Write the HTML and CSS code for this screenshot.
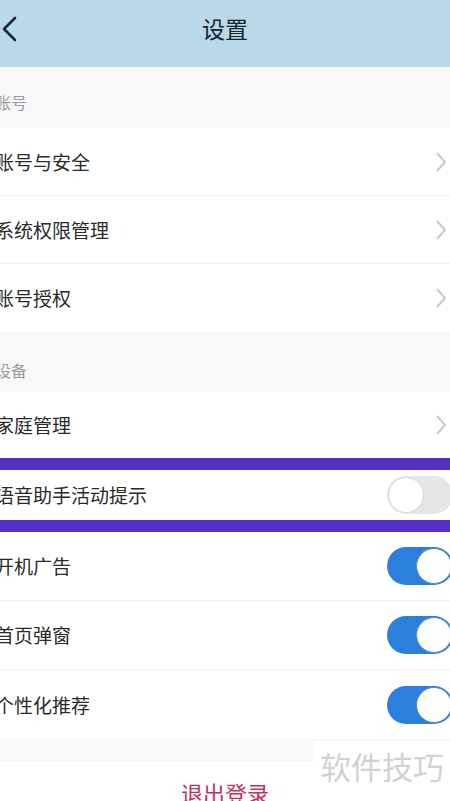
FILE: index.html
```html
<!DOCTYPE html>
<html lang="zh">
<head>
<meta charset="utf-8">
<link rel="stylesheet" href="styles.css">
</head>
<body>
<div class="page">
  <header class="topbar">
    <svg class="back" width="16" height="26" viewBox="0 0 16 26"><path d="M14 2 L3 13 L14 24" fill="none" stroke="#1c2630" stroke-width="2.6" stroke-linecap="round" stroke-linejoin="round"/></svg>
    <h1 class="title">设置</h1>
  </header>

  <div class="section s1"><span class="sec-label">账号</span></div>
  <div class="row r68"><span class="label">账号与安全</span><svg class="chev" width="12" height="22" viewBox="0 0 12 22"><path d="M2 2 L10 11 L2 20" fill="none" stroke="#cacaca" stroke-width="2"/></svg></div>
  <div class="row r68"><span class="label">系统权限管理</span><svg class="chev" width="12" height="22" viewBox="0 0 12 22"><path d="M2 2 L10 11 L2 20" fill="none" stroke="#cacaca" stroke-width="2"/></svg></div>
  <div class="row r68 last"><span class="label">账号授权</span><svg class="chev" width="12" height="22" viewBox="0 0 12 22"><path d="M2 2 L10 11 L2 20" fill="none" stroke="#cacaca" stroke-width="2"/></svg></div>

  <div class="section s2"><span class="sec-label">设备</span></div>
  <div class="row r66 last"><span class="label">家庭管理</span><svg class="chev" width="12" height="22" viewBox="0 0 12 22"><path d="M2 2 L10 11 L2 20" fill="none" stroke="#cacaca" stroke-width="2"/></svg></div>
  <div class="band"></div>
  <div class="row r50 last"><span class="label">语音助手活动提示</span><span class="toggle off"><span class="knob"></span></span></div>
  <div class="band"></div>
  <div class="row r69"><span class="label">开机广告</span><span class="toggle on"><span class="knob"></span></span></div>
  <div class="row r69"><span class="label">首页弹窗</span><span class="toggle on"><span class="knob"></span></span></div>
  <div class="row r69 last"><span class="label">个性化推荐</span><span class="toggle on"><span class="knob"></span></span></div>

  <div class="gap"></div>
  <div class="logout">退出登录</div>
  <div class="watermark">软件技巧</div>
</div>
</body>
</html>
```

FILE: styles.css
```css
html, body {
  margin: 0;
  padding: 0;
  background: #f8f8fa;
}
body {
  width: 450px;
  height: 801px;
  overflow: hidden;
  font-family: "Noto Sans CJK SC", "Noto Sans", sans-serif;
}
.page {
  position: relative;
  width: 450px;
  height: 801px;
  overflow: hidden;
}
.topbar {
  height: 67px;
  box-sizing: border-box;
  padding-top: 13px;
  background: #b8d9e7;
  display: flex;
  align-items: flex-start;
  justify-content: center;
  position: relative;
}
.back {
  position: absolute;
  left: 1px;
  top: 16px;
}
.title {
  margin: 0;
  font-size: 23px;
  font-weight: 400;
  color: #17242c;
  line-height: 30px;
}
.section {
  box-sizing: border-box;
  background: #f8f8fa;
}
.s1 { height: 61px; padding-top: 24px; }
.s2 { height: 60px; padding-top: 27px; }
.sec-label {
  display: block;
  margin-left: -5px;
  font-size: 16px;
  line-height: 22px;
  color: #9a9a9a;
}
.row {
  box-sizing: border-box;
  background: #fff;
  display: flex;
  align-items: center;
  justify-content: space-between;
  border-bottom: 1px solid #f4f4f6;
}
.row.last { border-bottom: none; }
.r68 { height: 68px; }
.r66 { height: 66px; }
.r50 { height: 50px; }
.r69 { height: 69px; }
.label {
  margin-left: -5px;
  font-size: 19px;
  line-height: 26px;
  color: #2a2a2a;
}
.chev {
  margin-right: 3px;
}
.band {
  height: 12px;
  background: #5531c7;
}
.toggle {
  position: relative;
  width: 66px;
  height: 38px;
  border-radius: 19px;
  margin-right: -3px;
  box-sizing: border-box;
}
.toggle.on { background: #2a80dc; }
.toggle.off { background: #e6e6e6; }
.knob {
  position: absolute;
  top: 1px;
  width: 36px;
  height: 36px;
  border-radius: 50%;
  background: #fff;
  box-sizing: border-box;
}
.toggle.on .knob { right: 1px; border: 1px solid #5d86b4; }
.toggle.off .knob { left: 1px; border: 1px solid #d6d6d6; }
.gap {
  height: 22px;
  background: #f8f8fa;
}
.logout {
  background: #fff;
  height: 40px;
  box-sizing: border-box;
  padding-top: 16px;
  text-align: center;
  font-size: 22px;
  line-height: 30px;
  color: #c2305e;
}
.watermark {
  position: absolute;
  left: 314px;
  top: 741px;
  width: 136px;
  height: 50px;
  background: #fff;
  font-size: 31px;
  line-height: 50px;
  color: #d2d2d2;
  text-align: center;
}
```
